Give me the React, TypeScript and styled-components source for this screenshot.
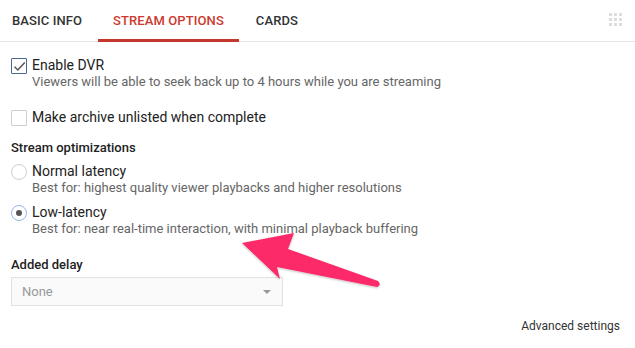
import React from 'react'
import styled, { createGlobalStyle } from 'styled-components'

const GlobalStyle = createGlobalStyle`
  html, body {
    margin: 0;
    padding: 0;
    background: #fff;
  }
  body {
    font-family: Roboto, 'Liberation Sans', Arial, sans-serif;
    color: #222;
  }
`

const Page = styled.div`
  position: relative;
  width: 635px;
  height: 348px;
  overflow: hidden;
`

const TabBar = styled.div`
  display: flex;
  align-items: stretch;
  height: 41px;
  border-bottom: 1px solid #e3e3e3;
`

const Tab = styled.div<{ $active?: boolean; $left?: number; $width?: number }>`
  display: flex;
  align-items: center;
  padding: 1px 15px 0 ${({ $left = 15 }) => $left}px;
  ${({ $width }) => ($width ? `width: ${$width}px; padding-right: 0;` : '')}
  font-size: 13px;
  font-weight: 500;
  letter-spacing: 0.1px;
  color: ${({ $active }) => ($active ? '#cc3a2f' : '#333')};
  border-bottom: 3px solid ${({ $active }) => ($active ? '#c4372c' : 'transparent')};
  margin-bottom: -1px;
`

const Spacer = styled.div`
  flex: 1;
`

const GridIcon = styled.div`
  display: grid;
  grid-template-columns: repeat(3, 3px);
  grid-template-rows: repeat(3, 3px);
  gap: 2px;
  margin: 13px 13px 0 0;
  span {
    background: #ddd;
  }
`

const Body = styled.div`
  padding: 15px 11px 0;
`

const Option = styled.div<{ $gap?: number }>`
  display: flex;
  align-items: flex-start;
  gap: 5px;
  margin-bottom: ${({ $gap = 19 }) => $gap}px;
`

const Box = styled.div<{ $checked?: boolean }>`
  flex: none;
  width: 14px;
  height: 14px;
  margin-top: 1px;
  border: 1px solid ${({ $checked }) => ($checked ? '#4a6695' : '#cfcfcf')};
  border-radius: 1px;
  background: #fff;
  display: flex;
  align-items: center;
  justify-content: center;
`

const Radio = styled.div<{ $checked?: boolean }>`
  flex: none;
  width: 14px;
  height: 14px;
  margin-top: 1px;
  border: 1px solid ${({ $checked }) => ($checked ? '#94b6e8' : '#cfcfcf')};
  border-radius: 50%;
  background: #fff;
  display: flex;
  align-items: center;
  justify-content: center;
  &::after {
    content: '';
    display: ${({ $checked }) => ($checked ? 'block' : 'none')};
    width: 6px;
    height: 6px;
    border-radius: 50%;
    background: #555;
  }
`

const Texts = styled.div`
  display: flex;
  flex-direction: column;
`

const Label = styled.div`
  font-size: 14px;
  line-height: 16px;
  color: #222;
`

const Hint = styled.div`
  font-size: 13px;
  line-height: 17px;
  color: #666;
`

const SectionTitle = styled.div<{ $top?: number; $bottom?: number }>`
  font-size: 13px;
  font-weight: 500;
  line-height: 16px;
  color: #222;
  margin: ${({ $top = -5 }) => $top}px 0 ${({ $bottom = 7 }) => $bottom}px;
`

const Select = styled.div`
  display: flex;
  align-items: center;
  justify-content: space-between;
  box-sizing: border-box;
  width: 272px;
  height: 29px;
  padding: 0 11px 0 10px;
  border: 1px solid #e1e1e1;
  background: #fafafa;
  font-size: 13px;
  color: #999;
`

const Caret = styled.span`
  width: 0;
  height: 0;
  border-left: 4px solid transparent;
  border-right: 4px solid transparent;
  border-top: 4px solid #999;
`

const Footer = styled.div`
  display: flex;
  justify-content: flex-end;
  padding: 13px 15px 0 0;
  font-size: 12px;
  color: #333;
`

const Overlay = styled.svg`
  position: absolute;
  left: 0;
  top: 0;
  pointer-events: none;
`

export default function App() {
  return (
    <Page>
      <GlobalStyle />
      <TabBar>
        <Tab $left={12} $width={86}>BASIC INFO</Tab>
        <Tab $active>STREAM OPTIONS</Tab>
        <Tab $left={17}>CARDS</Tab>
        <Spacer />
        <GridIcon>
          {Array.from({ length: 9 }).map((_, i) => (
            <span key={i} />
          ))}
        </GridIcon>
      </TabBar>
      <Body>
        <Option>
          <Box $checked>
            <svg width="13" height="11" viewBox="0 0 13 11">
              <path d="M1.5 5.8 L4.8 9 L11.8 1.5" fill="none" stroke="#555" strokeWidth="1.5" />
            </svg>
          </Box>
          <Texts>
            <Label>Enable DVR</Label>
            <Hint>Viewers will be able to seek back up to 4 hours while you are streaming</Hint>
          </Texts>
        </Option>
        <Option>
          <Box />
          <Texts>
            <Label>Make archive unlisted when complete</Label>
          </Texts>
        </Option>
        <SectionTitle>Stream optimizations</SectionTitle>
        <Option $gap={8}>
          <Radio />
          <Texts>
            <Label>Normal latency</Label>
            <Hint>Best for: highest quality viewer playbacks and higher resolutions</Hint>
          </Texts>
        </Option>
        <Option $gap={8}>
          <Radio $checked />
          <Texts>
            <Label>Low-latency</Label>
            <Hint>Best for: near real-time interaction, with minimal playback buffering</Hint>
          </Texts>
        </Option>
        <SectionTitle $top={20} $bottom={4}>Added delay</SectionTitle>
        <Select>
          <span>None</span>
          <Caret />
        </Select>
      </Body>
      <Footer>Advanced settings</Footer>
      <Overlay width="635" height="348" viewBox="0 0 635 348">
        <defs>
          <filter id="shadow" x="-10%" y="-10%" width="120%" height="130%">
            <feDropShadow dx="0" dy="1" stdDeviation="1" floodColor="#000" floodOpacity="0.25" />
          </filter>
        </defs>
        <path
          d="M242 243 L294 233 L288 249 L378 281 Q382 285 377 287 L277 267 L280 279 Z"
          fill="#fc2a68"
          filter="url(#shadow)"
        />
      </Overlay>
    </Page>
  )
}
